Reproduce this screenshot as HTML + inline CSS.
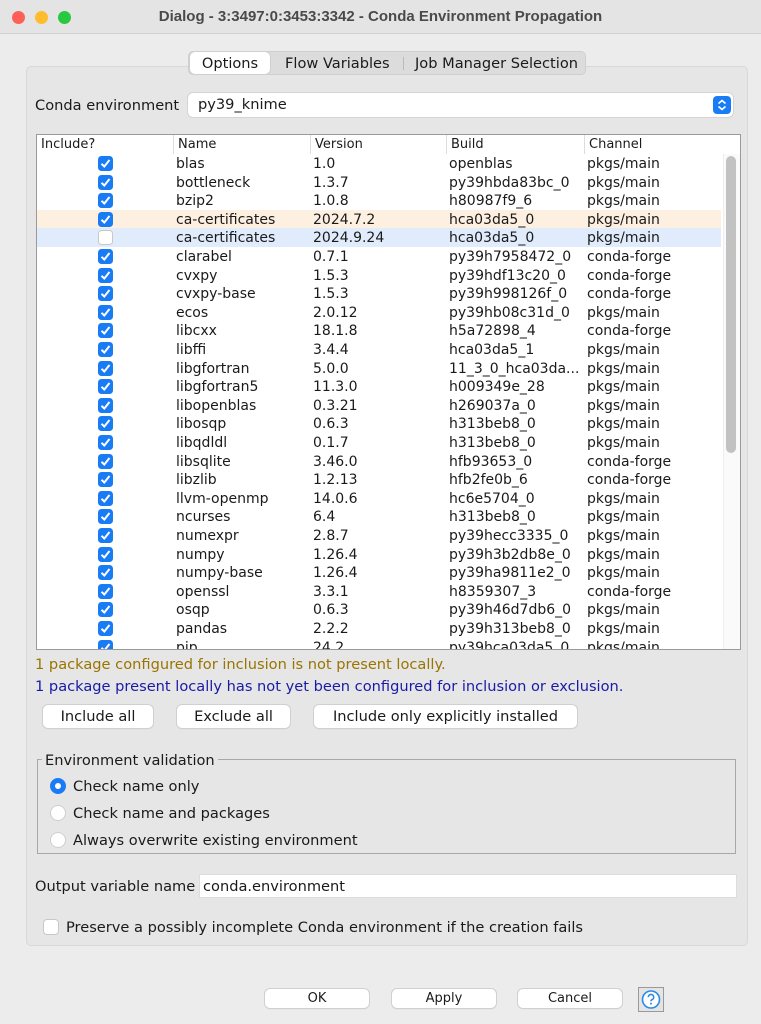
<!DOCTYPE html>
<html><head><meta charset="utf-8"><style>
*{box-sizing:border-box;margin:0;padding:0}
body{width:761px;height:1024px;background:#ececec;font-family:"DejaVu Sans","Liberation Sans",sans-serif;font-size:14.6px;color:#1a1a1a;position:relative;overflow:hidden}
.abs{position:absolute}
.title{left:0;top:0;width:761px;height:34px;background:#e4e4e4;border-bottom:1px solid #d0d0d0;text-align:center;line-height:34px;font-weight:bold;color:#4a4a4a;font-size:15px;font-family:"Liberation Sans",sans-serif}
.dot{width:13px;height:13px;border-radius:50%;top:11px}
.panel{left:26px;top:66px;width:722px;height:880px;background:#e6e6e6;border:1px solid #d8d8d8;border-radius:5px}
.tabs{left:188px;top:51px;height:24px;width:398px;background:#dcdcdc;border-radius:5px;border:1px solid #cfcfcf}
.tab{top:0;height:22px;line-height:23px;font-size:14.6px}
.combo{left:188px;top:93px;width:545px;height:24px;background:#fff;border-radius:5px;box-shadow:0 0 0 1px #d4d4d4;padding-left:10px;line-height:24px}
.table{left:36px;top:134px;width:705px;height:516px;background:#fff;border:1px solid #9a9a9a;overflow:hidden;font-size:14px}
.row{position:absolute;left:0;width:684px;height:18.6px;line-height:20px}
.row span{position:absolute;white-space:nowrap}
.cb{position:absolute;left:61px;top:2px;width:15px;height:15px;border-radius:3.5px;background:#1a7cf5}
.cb svg{position:absolute;left:2px;top:2px}
.cbe{position:absolute;left:61px;top:2px;width:15px;height:15px;border-radius:3.5px;background:#fff;border:1px solid #c8c8c8}
.btn{background:#fff;border-radius:5px;box-shadow:0 0 0 1px #d0d0d0,0 1px 1px #c8c8c8;text-align:center;height:23px;line-height:23px}
.radio{width:16px;height:16px;border-radius:50%;background:#fff;border:1px solid #cfcfcf}
</style></head><body>
<div class="abs title">Dialog - 3:3497:0:3453:3342 - Conda Environment Propagation</div>
<div class="abs dot" style="left:12px;background:#fe5f57"></div>
<div class="abs dot" style="left:35px;background:#febc2e"></div>
<div class="abs dot" style="left:58px;background:#28c840"></div>
<div class="abs panel"></div>
<div class="abs tabs">
 <div class="abs tab" style="left:1px;width:80px;background:#fff;border-radius:5px;text-align:center;box-shadow:0 0 0 1px #cfcfcf">Options</div>
 <div class="abs tab" style="left:96px">Flow Variables</div>
 <div class="abs" style="left:214px;top:5px;width:1px;height:13px;background:#bbb"></div>
 <div class="abs tab" style="left:226px">Job Manager Selection</div>
</div>
<div class="abs" style="left:35px;top:97px">Conda environment</div>
<div class="abs combo">py39_knime</div>
<div class="abs" style="left:713px;top:96px;width:18px;height:18px;border-radius:4px;background:#1a7cf5"><svg width="18" height="18"><path d="M5.5 7.5 9 4.5 12.5 7.5M5.5 10.5 9 13.5 12.5 10.5" stroke="#fff" stroke-width="1.6" fill="none"/></svg></div>
<div class="abs table">
 <div class="row" style="top:0;height:19px;line-height:19px;font-size:13px"><span style="left:4px">Include?</span><span style="left:136px;border-left:1px solid #ddd;padding-left:4px">Name</span><span style="left:273px;border-left:1px solid #ddd;padding-left:4px">Version</span><span style="left:409px;border-left:1px solid #ddd;padding-left:4px">Build</span><span style="left:547px;border-left:1px solid #ddd;padding-left:4px">Channel</span></div>
 <div id="rows"></div>
 <div class="abs" style="left:686px;top:19px;width:18px;height:500px;background:#fafafa;border-left:1px solid #eee"></div>
 <div class="abs" style="left:689px;top:21px;width:10px;height:297px;border-radius:5px;background:#c2c2c2"></div>
</div>
<div class="abs" style="left:35px;top:656px;color:#9a7400">1 package configured for inclusion is not present locally.</div>
<div class="abs" style="left:35px;top:678px;color:#1a1aa8">1 package present locally has not yet been configured for inclusion or exclusion.</div>
<div class="abs btn" style="left:43px;top:705px;width:110px">Include all</div>
<div class="abs btn" style="left:177px;top:705px;width:113px">Exclude all</div>
<div class="abs btn" style="left:314px;top:705px;width:263px">Include only explicitly installed</div>
<div class="abs" style="left:37px;top:759px;width:699px;height:95px;border:1px solid #a8a8a8"></div>
<div class="abs" style="left:42px;top:752px;background:#e6e6e6;padding:0 3px">Environment validation</div>
<div class="abs radio" style="left:50px;top:778px;background:#1a7cf5;border-color:#1a7cf5"><div style="position:absolute;left:4px;top:4px;width:6px;height:6px;border-radius:50%;background:#fff"></div></div>
<div class="abs" style="left:73px;top:778px">Check name only</div>
<div class="abs radio" style="left:50px;top:805px"></div>
<div class="abs" style="left:73px;top:805px">Check name and packages</div>
<div class="abs radio" style="left:50px;top:832px"></div>
<div class="abs" style="left:73px;top:832px">Always overwrite existing environment</div>
<div class="abs" style="left:35px;top:878px">Output variable name</div>
<div class="abs" style="left:200px;top:875px;width:536px;height:22px;background:#fff;box-shadow:0 0 0 1px #ddd;padding-left:3px;line-height:23px">conda.environment</div>
<div class="abs" style="left:43px;top:919px;width:16px;height:16px;border-radius:4px;background:#fff;border:1px solid #c8c8c8"></div>
<div class="abs" style="left:66px;top:919px">Preserve a possibly incomplete Conda environment if the creation fails</div>
<div class="abs btn" style="left:265px;top:989px;width:104px;height:19px;line-height:19px;font-size:13px">OK</div>
<div class="abs btn" style="left:392px;top:989px;width:104px;height:19px;line-height:19px;font-size:13px">Apply</div>
<div class="abs btn" style="left:518px;top:989px;width:104px;height:19px;line-height:19px;font-size:13px">Cancel</div>
<div class="abs" style="left:638px;top:987px;width:26px;height:25px;border:1px solid #999;background:#e4e4e4"><svg width="24" height="23"><circle cx="12" cy="11.5" r="8.5" fill="#fff" stroke="#2a8ae6" stroke-width="1.6"/><path d="M9.3 9.2a2.7 2.7 0 1 1 3.6 2.5c-.7.3-.9.8-.9 1.6" stroke="#2a8ae6" stroke-width="1.6" fill="none"/><circle cx="12" cy="15.6" r="1" fill="#2a8ae6"/></svg></div>
<script>
var d=[["blas","1.0","openblas","pkgs/main"],["bottleneck","1.3.7","py39hbda83bc_0","pkgs/main"],["bzip2","1.0.8","h80987f9_6","pkgs/main"],["ca-certificates","2024.7.2","hca03da5_0","pkgs/main",1],["ca-certificates","2024.9.24","hca03da5_0","pkgs/main",2],["clarabel","0.7.1","py39h7958472_0","conda-forge"],["cvxpy","1.5.3","py39hdf13c20_0","conda-forge"],["cvxpy-base","1.5.3","py39h998126f_0","conda-forge"],["ecos","2.0.12","py39hb08c31d_0","pkgs/main"],["libcxx","18.1.8","h5a72898_4","conda-forge"],["libffi","3.4.4","hca03da5_1","pkgs/main"],["libgfortran","5.0.0","11_3_0_hca03da...","pkgs/main"],["libgfortran5","11.3.0","h009349e_28","pkgs/main"],["libopenblas","0.3.21","h269037a_0","pkgs/main"],["libosqp","0.6.3","h313beb8_0","pkgs/main"],["libqdldl","0.1.7","h313beb8_0","pkgs/main"],["libsqlite","3.46.0","hfb93653_0","conda-forge"],["libzlib","1.2.13","hfb2fe0b_6","conda-forge"],["llvm-openmp","14.0.6","hc6e5704_0","pkgs/main"],["ncurses","6.4","h313beb8_0","pkgs/main"],["numexpr","2.8.7","py39hecc3335_0","pkgs/main"],["numpy","1.26.4","py39h3b2db8e_0","pkgs/main"],["numpy-base","1.26.4","py39ha9811e2_0","pkgs/main"],["openssl","3.3.1","h8359307_3","conda-forge"],["osqp","0.6.3","py39h46d7db6_0","pkgs/main"],["pandas","2.2.2","py39h313beb8_0","pkgs/main"],["pip","24.2","py39hca03da5_0","pkgs/main"]];
var h="";d.forEach(function(r,i){var bg=r[4]==1?"background:#fdf0e0;":r[4]==2?"background:#e0ecfb;":"";
h+='<div class="row" style="top:'+(19+i*18.6)+'px;'+bg+'">'+(r[4]==2?'<div class="cbe"></div>':'<div class="cb"><svg width="11" height="11"><path d="M1.5 5.8 4.3 8.5 9.5 2" stroke="#fff" stroke-width="2" fill="none"/></svg></div>')+'<span style="left:139px">'+r[0]+'</span><span style="left:276px">'+r[1]+'</span><span style="left:412px">'+r[2]+'</span><span style="left:550px">'+r[3]+'</span></div>';});
document.getElementById("rows").innerHTML=h;
</script>
</body></html>
